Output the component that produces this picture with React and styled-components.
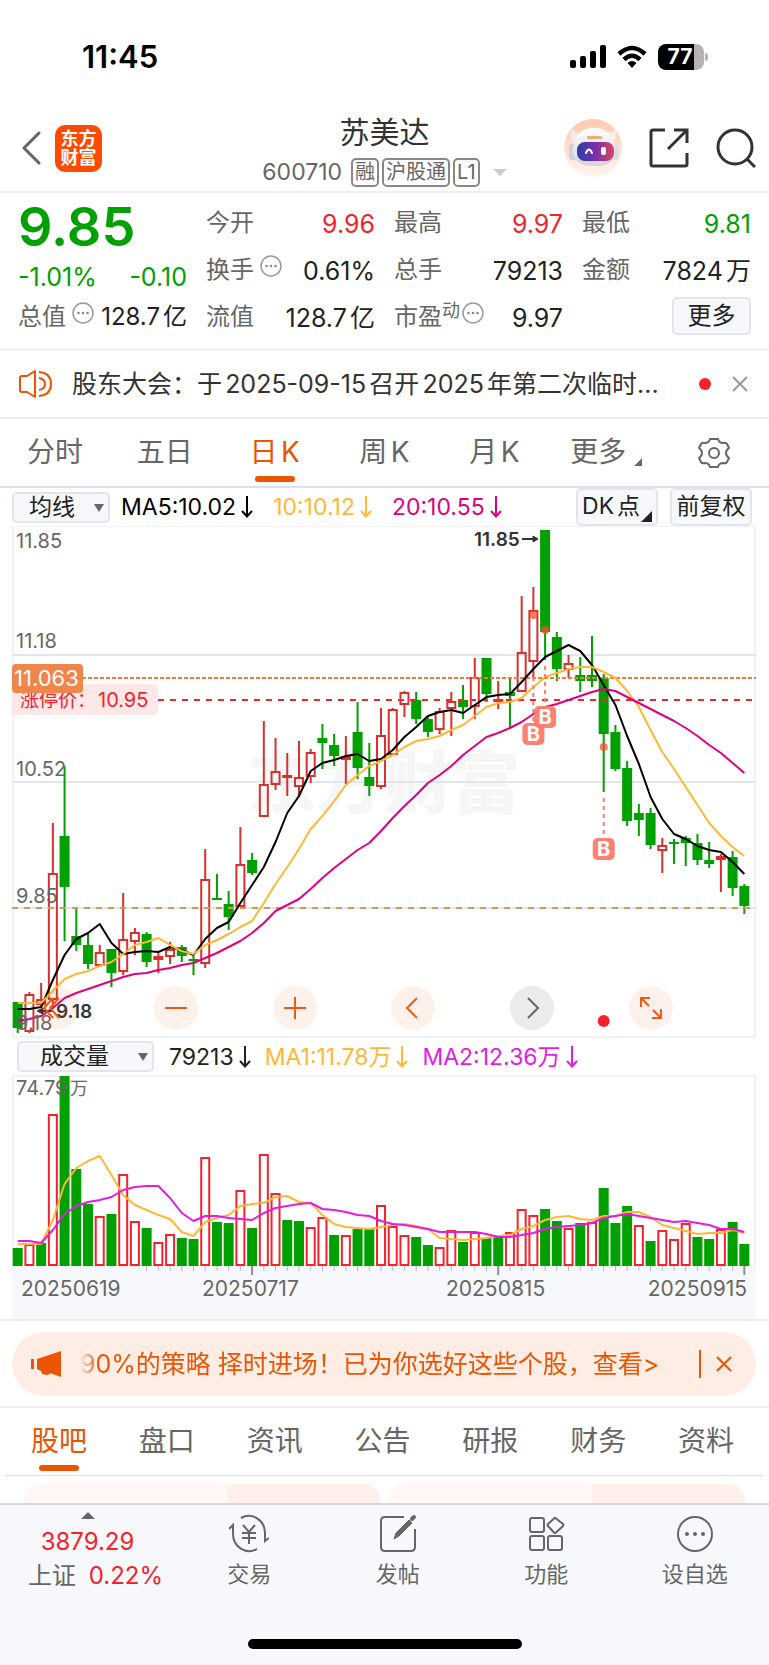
import React, { useState } from 'react';
import styled, { createGlobalStyle, css } from 'styled-components';

const RED = '#f5222d';
const GREEN = '#00a000';
const ORANGE = '#ea5504';
const STEP = 11.72;
const FIRST_X = 5.7;

// [direction, high, low, body top, body bottom]
const CANDLES = [
    ['g', 476, 507, 476, 502],
    ['r', 466, 507, 468, 506],
    ['r', 457, 482, 473, 479],
    ['r', 297, 481, 347, 474],
    ['g', 240, 415, 310, 361],
    ['g', 383, 425, 410, 419],
    ['g', 407, 443, 419, 438],
    ['r', 419, 441, 426, 440],
    ['g', 423, 461, 423, 447],
    ['r', 367, 449, 413, 446],
    ['r', 402, 429, 406, 416],
    ['g', 406, 441, 408, 436],
    ['r', 427, 447, 430, 434],
    ['r', 416, 438, 423, 431],
    ['g', 419, 436, 421, 430],
    ['g', 430, 449, 433, 434],
    ['r', 323, 442, 353, 438],
    ['g', 348, 373, 372, 373],
    ['g', 365, 404, 378, 391],
    ['r', 301, 381, 338, 381],
    ['g', 327, 349, 334, 347],
    ['r', 195, 291, 258, 291],
    ['r', 212, 264, 245, 259],
    ['r', 227, 270, 249, 252],
    ['r', 215, 271, 251, 261],
    ['r', 223, 257, 226, 251],
    ['g', 198, 243, 212, 217],
    ['g', 208, 240, 219, 230],
    ['r', 210, 258, 230, 234],
    ['g', 176, 253, 206, 242],
    ['g', 217, 270, 251, 260],
    ['r', 182, 263, 209, 261],
    ['r', 182, 230, 183, 229],
    ['r', 165, 191, 166, 179],
    ['g', 166, 198, 174, 193],
    ['g', 190, 211, 193, 206],
    ['r', 182, 208, 185, 204],
    ['r', 166, 210, 175, 183],
    ['g', 159, 193, 174, 181],
    ['r', 132, 193, 151, 181],
    ['g', 132, 176, 132, 168],
    ['r', 155, 183, 173, 176],
    ['g', 151, 202, 166, 170],
    ['r', 70, 166, 126, 166],
    ['r', 61, 151, 84, 136],
    ['g', 4, 134, 4, 106],
    ['g', 106, 155, 111, 143],
    ['r', 129, 152, 137, 144],
    ['g', 131, 166, 149, 155],
    ['g', 110, 161, 149, 155],
    ['g', 148, 266, 152, 208],
    ['g', 199, 245, 206, 243],
    ['g', 235, 300, 242, 295],
    ['g', 278, 310, 287, 294],
    ['g', 282, 323, 287, 319],
    ['r', 312, 347, 319, 325],
    ['g', 313, 338, 316, 317],
    ['g', 310, 340, 312, 317],
    ['g', 308, 339, 317, 334],
    ['g', 316, 342, 334, 338],
    ['r', 328, 366, 330, 334],
    ['g', 325, 370, 331, 362],
    ['g', 358, 388, 360, 380]
];

const MA5 = [
    483, 483, 481, 454, 429, 413, 407, 398, 417, 428, 426, 425, 426, 421, 424, 429,
    413, 402, 396, 377, 359, 341, 316, 287, 270, 245, 237, 234, 230, 228, 235, 233,
    224, 211, 201, 190, 186, 184, 187, 179, 171, 169, 168, 156, 143, 131, 125, 119,
    125, 139, 159, 179, 210, 238, 271, 293, 308, 313, 320, 324, 326, 336, 348
];
const MA10 = [
    477, 477, 477, 465, 453, 448, 445, 440, 436, 428, 419, 416, 412, 419, 425, 428,
    419, 414, 408, 401, 395, 377, 358, 341, 323, 303, 290, 275, 259, 249, 240, 235,
    229, 221, 215, 213, 210, 204, 199, 190, 181, 177, 176, 172, 161, 151, 147, 143,
    141, 141, 146, 152, 165, 181, 204, 226, 243, 261, 279, 297, 310, 321, 330
];
const MA20 = [
    495, 493, 490, 482, 472, 467, 463, 459, 455, 451, 448, 447, 444, 442, 439, 437,
    432, 427, 421, 415, 407, 397, 385, 379, 373, 363, 352, 342, 333, 324, 317, 305,
    292, 280, 269, 257, 249, 240, 229, 220, 211, 207, 202, 196, 188, 181, 178, 174,
    170, 166, 163, 165, 171, 177, 183, 189, 195, 202, 210, 219, 227, 237, 247
];

const VOLUME_COLORS =
    'grgrgggrgrrgrrggrggrgrrggrrgrggrrrggrrgrggrrrggrgrgggrgrrrggrgg';
const VOLUMES = [
    173, 169, 168, 39, 1, 94, 129, 141, 139, 99, 146, 153, 167, 159, 163, 164,
    82, 147, 148, 115, 153, 79, 118, 145, 146, 152, 142, 160, 160, 154, 154, 130,
    151, 160, 162, 170, 172, 155, 167, 157, 163, 162, 157, 134, 140, 134, 146, 153,
    148, 147, 113, 148, 131, 150, 166, 155, 164, 148, 162, 164, 154, 147, 169
];
const VOLUME_MA1 = [
    169, 169, 169, 145, 109, 93, 86, 81, 100, 120, 130, 135, 140, 144, 157, 161,
    147, 143, 140, 131, 129, 128, 122, 121, 127, 128, 140, 149, 152, 153, 154, 152,
    150, 149, 151, 154, 163, 164, 165, 164, 163, 161, 160, 154, 151, 145, 142, 141,
    144, 145, 141, 141, 137, 137, 142, 150, 153, 156, 159, 158, 158, 155, 158
];
const VOLUME_MA2 = [
    166, 166, 168, 155, 139, 131, 127, 125, 122, 115, 112, 111, 111, 123, 138, 146,
    141, 141, 143, 144, 145, 138, 133, 131, 129, 128, 134, 135, 137, 140, 141, 146,
    149, 150, 152, 154, 157, 157, 157, 157, 159, 162, 162, 160, 158, 154, 152, 151,
    150, 148, 143, 141, 139, 141, 143, 145, 147, 146, 148, 150, 154, 154, 157
];

// [candle index, dot y, dash from, dash to, badge centre y]
const BUYS = [
    [44, 89, 151, 197, 208],
    [45, 104, 140, 179, 191],
    [50, 221, 272, 311, 323]
];

const CHART_TABS = ['分时', '五日', '日K', '周K', '月K'];
const INFO_TABS = ['股吧', '盘口', '资讯', '公告', '研报', '财务', '资料'];

const xAt = index => FIRST_X + index * STEP;
const toPoints = values => values.map((y, i) => `${xAt(i)},${y}`).join(' ');

const Line = ({ values, color }) => (
    <polyline
        points={toPoints(values)}
        fill="none"
        stroke={color}
        strokeWidth="2"
        strokeLinejoin="round"
    />
);

const Candle = ({ index, data: [dir, high, low, top, bottom] }) => {
    const x = xAt(index);
    const height = bottom - top;
    const color = dir === 'g' ? GREEN : '#d6302f';
    if (dir === 'g' || height < 4) {
        return (
            <g fill={color}>
                <rect x={x - 1} y={high} width="2" height={low - high} />
                <rect x={x - 5} y={top} width="10" height={Math.max(height, 2)} />
            </g>
        );
    }
    return (
        <g stroke={color} strokeWidth="2" fill="none">
            <path d={`M${x} ${high}V${top}M${x} ${bottom}V${low}`} />
            <rect x={x - 4} y={top + 1} width="8" height={height - 2} />
        </g>
    );
};

const PriceChart = () => (
    <Chart viewBox="0 0 744 512" role="img" aria-label="日K线">
        <g fill="#f6f6f6" fontSize="68" fontWeight="900">
            <text x="236" y="282">
                东方财富
            </text>
        </g>
        <g stroke="#e3e5ec" strokeWidth="2" fill="none">
            <path d="M0 129H744M0 256H744M0 382H744" />
            <path d="M1 0V511H743V0Z" strokeWidth="1" />
        </g>
        {CANDLES.map((data, i) => (
            <Candle key={i} index={i} data={data} />
        ))}
        <path
            d="M0 382H744"
            stroke="#cf9a5b"
            strokeWidth="2"
            strokeDasharray="6 6"
        />
        <path
            d="M70 152H744"
            stroke="#f47a3a"
            strokeWidth="2"
            strokeDasharray="4 2"
        />
        <path
            d="M146 174H744"
            stroke="#f0282e"
            strokeWidth="2"
            strokeDasharray="6 6"
        />
        <Line values={MA5} color="#000" />
        <Line values={MA10} color="#ffb835" />
        <Line values={MA20} color="#e0007f" />
        {BUYS.map(([index, dot, from, to, badge]) => (
            <g key={index}>
                <circle cx={xAt(index)} cy={dot} r="4" fill="#f4502f" opacity="0.75" />
                <path
                    d={`M${xAt(index)} ${from}V${to}`}
                    stroke="#ff7a6a"
                    strokeWidth="2"
                    strokeDasharray="4 4"
                />
                <rect
                    x={xAt(index) - 11}
                    y={badge - 11}
                    width="22"
                    height="22"
                    rx="5"
                    fill="#ff7a6a"
                    opacity="0.95"
                />
                <text
                    x={xAt(index)}
                    y={badge + 7}
                    textAnchor="middle"
                    fontSize="20"
                    fontWeight="700"
                    fill="#fff"
                >
                    B
                </text>
            </g>
        ))}
        <g fontSize="20" fill="#666">
            <text x="4" y="22">11.85</text>
            <text x="4" y="122">11.18</text>
            <text x="4" y="250">10.52</text>
            <text x="4" y="377">9.85</text>
            <text x="4" y="504">9.18</text>
        </g>
        <path d="M0 158H142a4 4 0 0 1 4 4V185a4 4 0 0 1-4 4H0Z" fill="#fee7e7" />
        <text x="8" y="181" fontSize="19" fill={RED}>
            涨停价：
        </text>
        <text x="86" y="181" fontSize="20" fill={RED}>
            10.95
        </text>
        <rect y="138" width="71" height="29" rx="4" fill="#f0864c" />
        <text x="2" y="160" fontSize="22" fill="#fff">
            11.063
        </text>
        <g fontSize="19" fontWeight="600" fill="#333">
            <text x="462" y="20">11.85</text>
            <text x="44" y="492">9.18</text>
        </g>
        <g stroke="#333" strokeWidth="2" fill="#333">
            <path d="M510 13H522" />
            <path d="M521 10L526 13L521 16Z" strokeWidth="1" />
            <path d="M30 485H41" />
            <path d="M31 482L25 485L31 488Z" strokeWidth="1" />
        </g>
        <circle cx={xAt(50)} cy="495" r="6" fill={RED} />
    </Chart>
);

const VolumeChart = () => (
    <Chart viewBox="0 0 744 244" role="img" aria-label="成交量">
        <rect y="191" width="744" height="53" fill="#f7f8fb" />
        <path d="M1 191V1H743V191" fill="none" stroke="#e3e5ec" />
        {VOLUMES.map((top, i) =>
            VOLUME_COLORS[i] === 'g' ? (
                <rect
                    key={i}
                    x={xAt(i) - 5}
                    y={top}
                    width="10"
                    height={191 - top}
                    fill={GREEN}
                />
            ) : (
                <rect
                    key={i}
                    x={xAt(i) - 4}
                    y={top + 1}
                    width="8"
                    height={189 - top}
                    fill="#fff"
                    stroke={RED}
                    strokeWidth="2"
                />
            )
        )}
        <Line values={VOLUME_MA1} color="#ffb835" />
        <Line values={VOLUME_MA2} color="#e41be4" />
        {VOLUMES.map((_, i) => {
            const major = i === 20 || i === 41 || i === 62;
            return i > 10 ? (
                <path
                    key={i}
                    d={`M${xAt(i)} 191V${major ? 200 : 196}`}
                    stroke={major ? '#8e8e93' : '#b9bac0'}
                    strokeWidth={major ? 2 : 1}
                />
            ) : null;
        })}
        <g fontSize="20" fill="#666">
            <text x="4" y="20">74.79</text>
            <text x="58" y="20" fontSize="18">
                万
            </text>
        </g>
        <g fontSize="21" fill="#666">
            <text x="9" y="221">20250619</text>
            <text x="190" y="221">20250717</text>
            <text x="434" y="221">20250815</text>
            <text x="735" y="221" textAnchor="end">
                20250915
            </text>
        </g>
    </Chart>
);

const Dots = () => (
    <DotsIcon viewBox="0 0 22 22">
        <circle cx="11" cy="11" r="10" fill="none" stroke="#999" strokeWidth="1.5" />
        <g fill="#888">
            <circle cx="6.5" cy="11" r="1.3" />
            <circle cx="11" cy="11" r="1.3" />
            <circle cx="15.5" cy="11" r="1.3" />
        </g>
    </DotsIcon>
);

const Robot = () => (
    <svg width="58" height="58" viewBox="0 0 58 58">
        <defs>
            <linearGradient id="halo" x1="0" y1="0" x2="0" y2="1">
                <stop offset="0" stopColor="#ffc9ae" />
                <stop offset="1" stopColor="#fff6f1" />
            </linearGradient>
            <linearGradient id="visor" x1="0" y1="0" x2="1" y2="0">
                <stop offset="0" stopColor="#2b3fa8" />
                <stop offset="0.5" stopColor="#7b2fa8" />
                <stop offset="1" stopColor="#e0465e" />
            </linearGradient>
            <linearGradient id="shell" x1="0" y1="0" x2="0" y2="1">
                <stop offset="0" stopColor="#ffffff" />
                <stop offset="1" stopColor="#d5d3dc" />
            </linearGradient>
        </defs>
        <circle cx="29" cy="29" r="29" fill="url(#halo)" />
        <path
            d="M9 24Q5 17 8 10Q11 15 17 14ZM43 14Q49 14 51 10Q54 17 49 25Z"
            fill="#f3eeee"
        />
        <rect x="5" y="25" width="9" height="16" rx="4" fill="#cfcdd8" />
        <rect x="47" y="25" width="8" height="16" rx="4" fill="#dedce4" />
        <path
            d="M30 9C42 9 49 15 51 28C53 42 45 47 31 47C16 47 7 42 9 28C11 15 18 9 30 9Z"
            fill="url(#shell)"
        />
        <rect x="23" y="17" width="15" height="3" rx="1" fill="#f0ac78" />
        <rect x="13" y="23" width="37" height="19" rx="8" fill="url(#visor)" />
        <path
            d="M22 34Q25 27 28 34"
            fill="none"
            stroke="#fff"
            strokeWidth="2"
            strokeLinecap="round"
        />
        <rect x="37" y="28" width="5" height="8" rx="2" fill="#fff" />
    </svg>
);

const Close = ({ color }) => (
    <svg width="16" height="16" viewBox="0 0 16 16">
        <path d="M1 1L15 15M15 1L1 15" stroke={color} strokeWidth="2" />
    </svg>
);

const Stat = ({ label, value, color, sup, dots, compact }) => (
    <StatRow>
        <StatLabel>
            {label}
            {sup && <Sup>{sup}</Sup>}
            {dots && <Dots />}
        </StatLabel>
        <StatValue color={color} compact={compact}>
            {value}
        </StatValue>
    </StatRow>
);

const Falling = ({ color, children }) => (
    <Indicator color={color}>
        {children}
        <svg width="12" height="22" viewBox="0 0 12 22" aria-label="下降">
            <path d="M6 0V20M1 15L6 20.500L11 15" />
        </svg>
    </Indicator>
);

const TOOLS = [
    ['后退', <path d="M18 12L9 22L18 32M24 12L15 22L24 32" />],
    ['缩小', <path d="M11 22H33" />],
    ['放大', <path d="M11 22H33M22 11V33" />],
    ['左移', <path d="M26 12L16 22L26 32" />],
    ['右移', <path d="M18 12L28 22L18 32" />],
    ['全屏', <path d="M12 21V12H21M12 12L20 20M32 23V32H23M32 32L24 24" />]
];

const ACTIONS = [
    [
        '交易',
        <>
            <path d="M12 4C23-2 36 6 36 19V27L40 24M28 35C17 41 4 33 4 20V11L0 15" />
            <path d="M14 11L20 18L26 11M13 19H27M13 24H27M20 18V30" />
        </>
    ],
    [
        '发帖',
        <>
            <path d="M26 3H7Q3 3 3 7V33Q3 37 7 37H33Q37 37 37 33V15" />
            <path d="M16 25L18 19L31 6L34 9L21 22Z" fill="#666" strokeWidth="1" />
            <path d="M34 5L36 3" strokeWidth="4" strokeLinecap="round" />
        </>
    ],
    [
        '功能',
        <>
            <rect x="4" y="4" width="14" height="14" rx="2" />
            <rect x="4" y="22" width="14" height="14" rx="2" />
            <rect x="22" y="22" width="14" height="14" rx="2" />
            <path d="M28 4.500Q29 3 30 4.500L37 10Q38 11 37 12L30 18.500Q29 19.500 28 18.500L22 12Q21 11 22 10Z" />
        </>
    ],
    [
        '设自选',
        <>
            <circle cx="20" cy="20" r="17" />
            <g fill="#666" stroke="none">
                <circle cx="12" cy="20" r="2" />
                <circle cx="20" cy="20" r="2" />
                <circle cx="28" cy="20" r="2" />
            </g>
        </>
    ]
];

export default function App() {
    const [chartTab, setChartTab] = useState('日K');
    const [infoTab, setInfoTab] = useState('股吧');

    return (
        <Page>
            <GlobalStyle />
            <StatusBar>
                <Clock>11:45</Clock>
                <StatusIcons>
                    <svg width="36" height="24" viewBox="0 0 36 24">
                        <rect x="0" y="15" width="6" height="8" rx="2" />
                        <rect x="10" y="11" width="6" height="12" rx="2" />
                        <rect x="20" y="6" width="6" height="17" rx="2" />
                        <rect x="30" y="0" width="6" height="23" rx="2" />
                    </svg>
                    <svg width="30" height="24" viewBox="0 0 30 24">
                        <g fill="none" stroke="#000" strokeWidth="4.500">
                            <path d="M2 9Q15-3 28 9" />
                            <path d="M7 14.500Q15 7 23 14.500" />
                        </g>
                        <path d="M10.500 18Q15 14 19.500 18L15 23Z" />
                    </svg>
                    <Battery>
                        <BatteryLevel>77</BatteryLevel>
                    </Battery>
                </StatusIcons>
            </StatusBar>

            <Header>
                <HeaderSide>
                    <IconButton aria-label="返回">
                        <svg width="20" height="34" viewBox="0 0 20 34" fill="none">
                            <path
                                d="M18 2L3 17L18 32"
                                stroke="#666"
                                strokeWidth="3"
                                strokeLinecap="round"
                                strokeLinejoin="round"
                            />
                        </svg>
                    </IconButton>
                    <Logo>
                        <span>东方</span>
                        <span>财富</span>
                    </Logo>
                </HeaderSide>
                <Heading>
                    <Title>苏美达</Title>
                    <CodeRow>
                        <Code>600710</Code>
                        <Tag>融</Tag>
                        <Tag>沪股通</Tag>
                        <Tag>L1</Tag>
                        <CodeCaret />
                    </CodeRow>
                </Heading>
                <HeaderSide right>
                    <IconButton aria-label="智能助手">
                        <Robot />
                    </IconButton>
                    <IconButton aria-label="分享">
                        <svg width="40" height="40" viewBox="0 0 40 40" fill="none">
                            <path
                                d="M16 2H4Q2 2 2 4V36Q2 38 4 38H36Q38 38 38 36V25M25 2H38V15M38 2L19 21"
                                stroke="#333"
                                strokeWidth="3"
                            />
                        </svg>
                    </IconButton>
                    <IconButton aria-label="搜索">
                        <svg width="40" height="40" viewBox="0 0 40 40" fill="none">
                            <circle cx="19" cy="19" r="17" stroke="#333" strokeWidth="3" />
                            <path d="M31 31L39 39" stroke="#333" strokeWidth="3" />
                        </svg>
                    </IconButton>
                </HeaderSide>
            </Header>

            <Quote>
                <div>
                    <Price>9.85</Price>
                    <Change>
                        <span>-1.01%</span>
                        <span>-0.10</span>
                    </Change>
                    <Stat label="总值" value="128.7亿" dots compact />
                </div>
                <div>
                    <Stat label="今开" value="9.96" color={RED} />
                    <Stat label="换手" value="0.61%" dots />
                    <Stat label="流值" value="128.7亿" />
                </div>
                <div>
                    <Stat label="最高" value="9.97" color={RED} />
                    <Stat label="总手" value="79213" />
                    <Stat label="市盈" value="9.97" sup="动" dots />
                </div>
                <div>
                    <Stat label="最低" value="9.81" color={GREEN} />
                    <Stat label="金额" value="7824万" />
                    <MoreRow>
                        <MoreButton>更多</MoreButton>
                    </MoreRow>
                </div>
            </Quote>

            <Notice>
                <svg width="34" height="28" viewBox="0 0 34 28" fill="none">
                    <g stroke={ORANGE} strokeWidth="2">
                        <path
                            d="M16 1V27L8 22H3Q1 22 1 20V8Q1 6 3 6H8Z"
                            strokeLinejoin="round"
                        />
                        <path d="M20 8Q26 9 26 14Q26 19 20 20" />
                        <path d="M20 2Q32 3 32 14Q32 25 20 26" />
                    </g>
                </svg>
                <NoticeText>股东大会：于2025-09-15召开2025年第二次临时...</NoticeText>
                <RedDot />
                <IconButton aria-label="关闭公告">
                    <Close color="#999" />
                </IconButton>
            </Notice>

            <ChartTabs>
                {CHART_TABS.map(tab => (
                    <Tab
                        key={tab}
                        active={tab === chartTab}
                        onClick={() => setChartTab(tab)}
                    >
                        {tab}
                    </Tab>
                ))}
                <MoreTab>
                    更多
                    <Corner />
                </MoreTab>
                <Tab aria-label="设置">
                    <svg width="32" height="32" viewBox="0 0 32 32" fill="none">
                        <g stroke="#666" strokeWidth="2">
                            <path
                                d="M12 2H20Q21 6 25 6Q28 5 29 7L31 11Q28 13 28 16Q28 19 31 21L29 25Q28 27 25 26Q21 26 20 30H12Q11 26 7 26Q4 27 3 25L1 21Q4 19 4 16Q4 13 1 11L3 7Q4 5 7 6Q11 6 12 2Z"
                                strokeLinejoin="round"
                            />
                            <circle cx="16" cy="16" r="5" />
                        </g>
                    </svg>
                </Tab>
            </ChartTabs>

            <Legend>
                <Picker>
                    <select aria-label="主图指标" defaultValue="ma">
                        <option value="ma">均线</option>
                    </select>
                </Picker>
                <Indicators>
                    <Falling color="#000">MA5:10.02</Falling>
                    <Falling color="#ffb835">10:10.12</Falling>
                    <Falling color="#e0007f">20:10.55</Falling>
                </Indicators>
                <LegendButton corner>
                    DK点
                    <Corner dark />
                </LegendButton>
                <LegendButton>前复权</LegendButton>
            </Legend>
            <ChartArea>
                <PriceChart />
                <ToolRow>
                    {TOOLS.map(([label, shape]) => (
                        <Tool key={label} aria-label={label} muted={label === '右移'}>
                            <svg viewBox="0 0 44 44">{shape}</svg>
                        </Tool>
                    ))}
                </ToolRow>
            </ChartArea>
            <Legend volume>
                <Picker wide>
                    <select aria-label="副图指标" defaultValue="vol">
                        <option value="vol">成交量</option>
                    </select>
                </Picker>
                <Indicators tight>
                    <Falling color="#222">79213</Falling>
                    <Falling color="#ffb835">MA1:11.78万</Falling>
                    <Falling color="#e41be4">MA2:12.36万</Falling>
                </Indicators>
            </Legend>
            <ChartArea>
                <VolumeChart />
            </ChartArea>

            <PromoSection>
                <Promo>
                    <svg width="30" height="26" viewBox="0 0 30 26" fill={ORANGE}>
                        <path d="M30 0V26L19 22V23L16 24L11 23L10 20L6 18V8Z" />
                        <rect x="0" y="8" width="3" height="10" />
                    </svg>
                    <PromoText href="#strategy">
                        90%的策略 择时进场！已为你选好这些个股，查看&gt;
                    </PromoText>
                    <PromoClose aria-label="关闭推广">
                        <Close color={ORANGE} />
                    </PromoClose>
                </Promo>
            </PromoSection>

            <InfoTabs>
                {INFO_TABS.map(tab => (
                    <Tab
                        key={tab}
                        active={tab === infoTab}
                        onClick={() => setInfoTab(tab)}
                    >
                        {tab}
                    </Tab>
                ))}
            </InfoTabs>
            <Cards>
                <Card />
                <Card />
            </Cards>

            <BottomBar>
                <Index>
                    <IndexCaret />
                    <IndexValue>3879.29</IndexValue>
                    <IndexChange>
                        上证 <b>0.22%</b>
                    </IndexChange>
                </Index>
                {ACTIONS.map(([label, icon]) => (
                    <Action key={label}>
                        <svg viewBox="0 0 40 40">{icon}</svg>
                        {label}
                    </Action>
                ))}
            </BottomBar>
            <HomeArea>
                <HomeIndicator />
            </HomeArea>
        </Page>
    );
}

const GlobalStyle = createGlobalStyle`
    * {
        box-sizing: border-box;
    }

    body {
        margin: 0;
        background: #fff;
    }

    body, button, select {
        font-family: Inter, 'Noto Sans CJK SC', sans-serif;
        line-height: 1.2;
        text-autospace: normal;
    }

    button {
        padding: 0;
        border: 0;
        background: none;
        color: inherit;
        cursor: pointer;
    }

    svg {
        display: block;
        flex: none;
    }
`;

const Page = styled.div`
    min-height: 100vh;
    display: flex;
    flex-direction: column;
    overflow: hidden;
    color: #333;
`;

const StatusBar = styled.div`
    display: flex;
    justify-content: space-between;
    align-items: center;
    height: 114px;
    padding: 0 65px 0 82px;
`;

const Clock = styled.div`
    font-size: 31px;
    font-weight: 600;
    color: #000;
`;

const StatusIcons = styled.div`
    display: flex;
    align-items: center;
    gap: 11px;
`;

const Battery = styled.div`
    position: relative;
    width: 46px;
    height: 26px;
    border-radius: 8px;
    background: linear-gradient(90deg, #000 78%, #b3b3b3 78%);

    &::after {
        content: '';
        position: absolute;
        right: -4px;
        top: 9px;
        width: 3px;
        height: 8px;
        border-radius: 0 3px 3px 0;
        background: #b3b3b3;
    }
`;

const BatteryLevel = styled.div`
    padding-right: 2px;
    line-height: 26px;
    text-align: center;
    font-size: 21px;
    font-weight: 700;
    color: #fff;
`;

const Header = styled.header`
    display: grid;
    grid-template-columns: 1fr auto 1fr;
    height: 79px;
    border-bottom: 2px solid #eee;
`;

const HeaderSide = styled.div`
    display: flex;
    align-items: center;
    height: 68px;
    gap: ${props => (props.right ? '27px' : '14px')};
    justify-content: ${props => (props.right ? 'flex-end' : 'flex-start')};
    padding: 0 13px 0 21px;
`;

const IconButton = styled.button`
    flex: none;
`;

const Logo = styled.div`
    display: flex;
    flex-direction: column;
    justify-content: center;
    width: 47px;
    height: 47px;
    border-radius: 10px;
    background: #ff4a00;
    color: #fff;
    text-align: center;
    font-size: 18px;
    font-weight: 700;
    line-height: 19px;
`;

const Heading = styled.div`
    display: flex;
    flex-direction: column;
    align-items: center;
`;

const Title = styled.h1`
    margin: 0;
    font-size: 30px;
    font-weight: 400;
    line-height: 36px;
`;

const CodeRow = styled.div`
    display: flex;
    align-items: center;
    gap: 3px;
    margin-top: 8px;
    color: #666;
`;

const Code = styled.span`
    margin-right: 6px;
    font-size: 23px;
`;

const Tag = styled.span`
    height: 29px;
    padding: 0 2px;
    border: 2px solid #888;
    border-radius: 5px;
    font-size: 20px;
    line-height: 25px;
`;

const CodeCaret = styled.span`
    margin-left: 10px;
    border: 7px solid transparent;
    border-top-color: #ccc;
    border-bottom: 0;
`;

const Quote = styled.section`
    display: grid;
    grid-template-columns: repeat(4, 1fr);
    gap: 19px;
    padding: 7px 18px 8px;
    border-bottom: 1px solid #e2e2e6;
`;

const Price = styled.div`
    font-size: 54px;
    font-weight: 600;
    line-height: 54px;
    color: ${GREEN};
`;

const Change = styled.div`
    display: flex;
    justify-content: space-between;
    height: 40px;
    font-size: 25px;
    line-height: 46px;
    color: ${GREEN};
`;

const StatRow = styled.div`
    display: flex;
    justify-content: space-between;
    align-items: center;
    height: 47px;
    white-space: nowrap;
`;

const StatLabel = styled.span`
    display: flex;
    align-items: center;
    font-size: 24px;
    color: #666;
`;

const Sup = styled.sup`
    align-self: flex-start;
    font-size: 18px;
    line-height: 18px;
`;

const DotsIcon = styled.svg`
    width: 22px;
    height: 22px;
    margin: 0 0 10px 6px;

    ${Sup} + & {
        margin-left: 2px;
    }
`;

const StatValue = styled.span`
    font-size: ${props => (props.compact ? '24px' : '25px')};
    color: ${props => props.color || '#222'};
`;

const MoreRow = styled.div`
    display: flex;
    justify-content: flex-end;
    align-items: center;
    height: 44px;
`;

const button = css`
    border: 2px solid #e3e5ec;
    border-radius: 5px;
    background: #f7f8fb;
    color: #222;
`;

const MoreButton = styled.button`
    ${button}
    width: 79px;
    height: 38px;
    font-size: 24px;
`;

const Notice = styled.section`
    display: flex;
    align-items: center;
    height: 69px;
    padding: 0 21px 0 19px;
    border-bottom: 2px solid #eee;
`;

const NoticeText = styled.div`
    flex: 1;
    min-width: 0;
    margin-left: 19px;
    overflow: hidden;
    white-space: nowrap;
    font-size: 25px;
    line-height: 36px;
`;

const RedDot = styled.span`
    width: 12px;
    height: 12px;
    margin: 0 21px 0 16px;
    border-radius: 50%;
    background: ${RED};
`;

const ChartTabs = styled.nav`
    display: grid;
    grid-template-columns: repeat(7, 1fr);
    height: 69px;
    border-bottom: 2px solid #e0e1e8;
`;

const Tab = styled.button`
    position: relative;
    display: flex;
    justify-content: center;
    align-items: center;
    font-size: 28px;
    color: ${props => (props.active ? ORANGE : '#666')};

    ${props =>
        props.active &&
        css`
            &::after {
                content: '';
                position: absolute;
                left: calc(50% - 20px);
                bottom: 4px;
                width: 40px;
                height: 6px;
                border-radius: 3px;
                background: ${ORANGE};
            }
        `}
`;

const MoreTab = styled(Tab)`
    padding-right: 12px;
`;

const Corner = styled.span`
    position: absolute;
    right: ${props => (props.dark ? '4px' : '17px')};
    bottom: ${props => (props.dark ? '2px' : '20px')};
    width: ${props => (props.dark ? '11px' : '8px')};
    height: ${props => (props.dark ? '11px' : '8px')};
    background: ${props => (props.dark ? '#222' : '#666')};
    clip-path: polygon(100% 0, 100% 100%, 0 100%);
`;

const InfoTabs = styled(ChartTabs)`
    height: 68px;
    margin: 0 6px 0 5px;
    padding-right: 3px;
    border-bottom-width: 1px;
`;

const Legend = styled.div`
    display: flex;
    align-items: center;
    height: ${props => (props.volume ? '37px' : '38px')};
    padding: 0 17px 0 ${props => (props.volume ? '17px' : '12px')};
`;

const Picker = styled.label`
    position: relative;
    flex: none;

    select {
        ${button}
        display: block;
        appearance: none;
        width: ${props => (props.wide ? '137px' : '98px')};
        height: 31px;
        padding: 0 0 0 ${props => (props.wide ? '21px' : '15px')};
        font-size: 23px;
        line-height: 27px;
    }

    &::after {
        content: '';
        position: absolute;
        right: 6px;
        top: 12px;
        border: 5px solid transparent;
        border-top: 8px solid #666;
        border-bottom: 0;
        pointer-events: none;
    }
`;

const Indicators = styled.div`
    display: flex;
    flex: 1;
    gap: ${props => (props.tight ? '14px' : '20px')};
    margin-left: ${props => (props.tight ? '15px' : '11px')};
`;

const Indicator = styled.span`
    display: flex;
    align-items: center;
    gap: 5px;
    font-size: 23px;
    line-height: 30px;
    white-space: nowrap;
    text-autospace: no-autospace;
    color: ${props => props.color};

    svg {
        fill: none;
        stroke: currentColor;
        stroke-width: 2;
    }
`;

const LegendButton = styled.button`
    ${button}
    position: relative;
    align-self: stretch;
    width: 82px;
    padding-right: ${props => (props.corner ? '12px' : '0')};
    font-size: 23px;
    white-space: nowrap;

    & + & {
        margin-left: 12px;
    }
`;

const ChartArea = styled.div`
    position: relative;
    padding: 0 13px 0 12px;
`;

const Chart = styled.svg`
    width: 100%;
    height: auto;
`;

const ToolRow = styled.div`
    position: absolute;
    left: 35px;
    right: 96px;
    bottom: 8px;
    display: flex;
    justify-content: space-between;
`;

const Tool = styled.button`
    width: 44px;
    height: 44px;
    border-radius: 50%;
    background: ${props =>
        props.muted ? '#ebebeb' : 'rgba(240, 100, 30, 0.09)'};

    svg {
        fill: none;
        stroke: ${props => (props.muted ? '#666' : '#f05a14')};
        stroke-width: 2;
    }
`;

const PromoSection = styled.section`
    padding: 11px 13px 10px 12px;
    border-top: 2px solid #eee;
    border-bottom: 2px solid #eee;
`;

const Promo = styled.div`
    display: flex;
    align-items: center;
    height: 64px;
    padding: 0 24px 0 19px;
    border-radius: 32px;
    background: #fdede5;
    color: ${ORANGE};
`;

const PromoText = styled.a`
    flex: 1;
    margin-left: 19px;
    overflow: hidden;
    white-space: nowrap;
    font-size: 25px;
    line-height: 36px;
    color: inherit;
    text-decoration: none;
    mask-image: linear-gradient(90deg, transparent, #000 18px);
`;

const PromoClose = styled.button`
    padding: 6px 0 6px 15px;
    border-left: 2px solid ${ORANGE};
`;

const Cards = styled.div`
    display: grid;
    grid-template-columns: 1fr 1fr;
    gap: 9px;
    padding: 8px 24px 0;
`;

const Card = styled.div`
    height: 19px;
    border-radius: 16px 16px 0 0;
    background: linear-gradient(90deg, #fff7f5 57%, #fff0ed 57%);
`;

const BottomBar = styled.nav`
    display: grid;
    grid-template-columns: 175px repeat(4, 1fr);
    height: 100px;
    border-top: 2px solid #d5d8de;
    background: #f7f8fb;
    color: #666;
`;

const Index = styled.div`
    display: flex;
    flex-direction: column;
    align-items: center;
    padding-top: 7px;
    font-size: 24px;
    line-height: 34px;
`;

const IndexCaret = styled.span`
    margin-bottom: 6px;
    border: 7px solid transparent;
    border-top: 0;
    border-bottom-color: #666;
`;

const IndexValue = styled.div`
    color: ${RED};
`;

const IndexChange = styled.div`
    padding-left: 16px;
    white-space: nowrap;

    b {
        margin-left: 6px;
        font-weight: 400;
        color: ${RED};
    }
`;

const Action = styled.button`
    display: flex;
    flex-direction: column;
    align-items: center;
    gap: 4px;
    padding-top: 9px;
    font-size: 22px;
    line-height: 32px;

    svg {
        width: 40px;
        height: 40px;
        fill: none;
        stroke: #666;
        stroke-width: 2;
    }
`;

const HomeArea = styled.div`
    flex: 1;
    display: flex;
    justify-content: center;
    align-items: flex-end;
    min-height: 62px;
    padding-bottom: 16px;
    background: #f7f8fb;
`;

const HomeIndicator = styled.div`
    width: 274px;
    height: 10px;
    border-radius: 5px;
    background: #000;
`;
